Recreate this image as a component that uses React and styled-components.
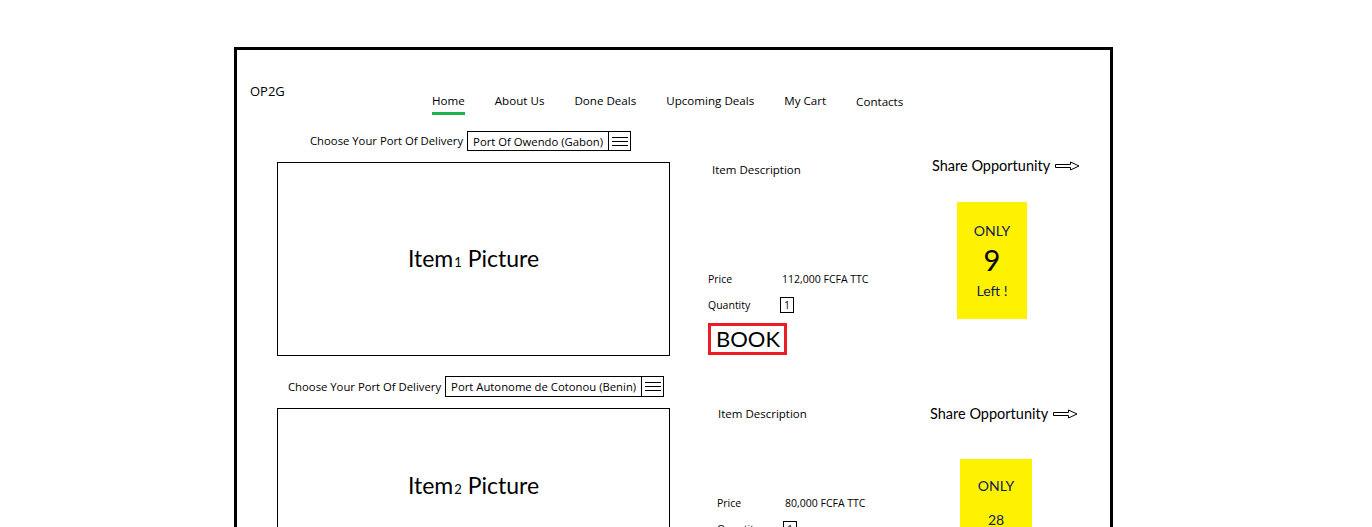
import React from 'react';
import styled, { createGlobalStyle } from 'styled-components';

const GlobalStyle = createGlobalStyle`
  body {
    margin: 0;
    background: #fff;
    overflow: hidden;
    color: #000;
    font-family: "Open Sans", "DejaVu Sans", sans-serif;
  }
`;

const navLinks = ['Home', 'About Us', 'Done Deals', 'Upcoming Deals', 'My Cart', 'Contacts'];

const deals = [
  {
    id: 1,
    port: 'Port Of Owendo (Gabon)',
    portIndent: 33,
    portGap: 16,
    selectHeight: 20,
    pictureHeight: 194,
    detailsOffset: 38,
    detailsWidth: 224,
    descIndent: 4,
    descShift: 0,
    priceGap: 93,
    labelWidth: 74,
    price: '112,000 FCFA TTC',
    sideOffset: -5,
    badgeGap: 27,
    badgeIndent: 25,
    badgeWidth: 70,
    badgePad: 20,
    count: '9',
    countSize: 29,
    countGap: 4,
  },
  {
    id: 2,
    port: 'Port Autonome de Cotonou (Benin)',
    portIndent: 11,
    portGap: 20,
    selectHeight: 21,
    pictureHeight: 156,
    detailsOffset: 47,
    detailsWidth: 213,
    descIndent: 1,
    descShift: -2,
    priceGap: 73,
    labelWidth: 68,
    price: '80,000 FCFA TTC',
    sideOffset: -3,
    badgeGap: 36,
    badgeIndent: 30,
    badgeWidth: 72,
    badgePad: 18,
    count: '28',
    countSize: 14,
    countGap: 16,
  },
];

const MenuIcon = () => (
  <svg width="16" height="11" viewBox="0 0 16 11">
    <path d="M0 1.5H16M0 5.5H16M0 9.5H16" stroke="#000" strokeWidth="1" />
  </svg>
);

const ShareArrow = () => (
  <svg width="25" height="10" viewBox="0 0 25 10">
    <path d="M0.5 3.5H15.5V1L24 5L15.5 9V6.5H0.5Z" fill="#fff" stroke="#000" strokeWidth="1" />
  </svg>
);

const DealItem = ({ deal }) => (
  <Deal $gap={deal.portGap}>
    <PortRow $indent={deal.portIndent}>
      <PortLabel>Choose Your Port Of Delivery</PortLabel>
      <PortSelect $height={deal.selectHeight}>
        <PortValue>{deal.port}</PortValue>
        <PortToggle>
          <MenuIcon />
        </PortToggle>
      </PortSelect>
    </PortRow>
    <DealBody>
      <Picture $height={deal.pictureHeight}>
        <span>
          Item<Sub>{deal.id}</Sub> Picture
        </span>
      </Picture>
      <Details $offset={deal.detailsOffset} $width={deal.detailsWidth}>
        <Description $indent={deal.descIndent} $shift={deal.descShift}>
          Item Description
        </Description>
        <InfoRow $gap={deal.priceGap} $label={deal.labelWidth}>
          <span>Price</span>
          <span>{deal.price}</span>
        </InfoRow>
        <InfoRow $gap={10} $label={deal.labelWidth}>
          <span>Quantity</span>
          <QtyBox>1</QtyBox>
        </InfoRow>
        <BookButton>BOOK</BookButton>
      </Details>
      <Side $offset={deal.sideOffset}>
        <Share>
          <span>Share Opportunity</span>
          <ShareArrow />
        </Share>
        <Badge
          $gap={deal.badgeGap}
          $indent={deal.badgeIndent}
          $width={deal.badgeWidth}
          $pad={deal.badgePad}
        >
          <BadgeText>ONLY</BadgeText>
          <BadgeCount $size={deal.countSize} $gap={deal.countGap}>
            {deal.count}
          </BadgeCount>
          <BadgeText $gap={6}>Left !</BadgeText>
        </Badge>
      </Side>
    </DealBody>
  </Deal>
);

export default function App() {
  return (
    <>
      <GlobalStyle />
      <Frame>
        <Header>
          <Logo>OP2G</Logo>
          <Nav>
            {navLinks.map((link, i) => (
              <NavLink key={link} $active={i === 0} $drop={link === 'Contacts'}>
                {link}
              </NavLink>
            ))}
          </Nav>
        </Header>
        {deals.map((deal) => (
          <DealItem key={deal.id} deal={deal} />
        ))}
      </Frame>
    </>
  );
}

const Frame = styled.div`
  box-sizing: border-box;
  width: 879px;
  min-height: 640px;
  margin: 47px 0 0 234px;
  border: 3px solid #000;
  padding: 0 0 40px 40px;
`;

const Header = styled.header`
  display: flex;
  align-items: flex-start;
  padding-top: 32px;
  margin-left: -27px;
`;

const Logo = styled.div`
  width: 182px;
  font-size: 13px;
  line-height: 18px;
`;

const Nav = styled.nav`
  display: flex;
  gap: 30px;
  margin-top: 11px;
`;

const NavLink = styled.a`
  font-size: 11.6px;
  line-height: 16px;
  padding-bottom: 2px;
  margin-top: ${(p) => (p.$drop ? '1px' : '0')};
  border-bottom: 3px solid ${(p) => (p.$active ? '#22b14c' : 'transparent')};
  color: #000;
  cursor: pointer;
`;

const Deal = styled.section`
  margin-top: ${(p) => p.$gap}px;
`;

const PortRow = styled.div`
  display: flex;
  align-items: center;
  gap: 4px;
  margin-left: ${(p) => p.$indent}px;
  font-size: 11.3px;
`;

const PortLabel = styled.span`
  line-height: 16px;
`;

const PortSelect = styled.div`
  box-sizing: border-box;
  display: flex;
  align-items: stretch;
  height: ${(p) => p.$height}px;
  border: 1px solid #000;
`;

const PortValue = styled.span`
  display: flex;
  align-items: center;
  padding: 0 5px 0 5px;
  border-right: 1px solid #000;
`;

const PortToggle = styled.span`
  display: flex;
  align-items: center;
  justify-content: center;
  width: 21px;
`;

const DealBody = styled.div`
  display: flex;
  align-items: flex-start;
  margin-top: 11px;
`;

const Picture = styled.div`
  box-sizing: border-box;
  display: flex;
  align-items: center;
  justify-content: center;
  flex: none;
  width: 393px;
  height: ${(p) => p.$height}px;
  padding-bottom: 2px;
  border: 1px solid #000;
  font-family: Lato, "Liberation Sans", sans-serif;
  font-size: 23px;
`;

const Sub = styled.span`
  font-size: 13px;
  margin-left: 1px;
`;

const Details = styled.div`
  display: flex;
  flex-direction: column;
  align-items: flex-start;
  flex: none;
  width: ${(p) => p.$width}px;
  margin-left: ${(p) => p.$offset}px;
  font-size: 11.5px;
`;

const Description = styled.div`
  line-height: 16px;
  margin-top: ${(p) => p.$shift}px;
  padding-left: ${(p) => p.$indent}px;
`;

const InfoRow = styled.div`
  display: grid;
  grid-template-columns: ${(p) => p.$label}px auto;
  align-items: center;
  min-height: 16px;
  margin-top: ${(p) => p.$gap}px;
  font-size: 10.5px;
`;

const QtyBox = styled.span`
  box-sizing: border-box;
  display: flex;
  align-items: center;
  justify-content: center;
  width: 14px;
  height: 16px;
  margin-left: -2px;
  border: 1px solid #000;
`;

const BookButton = styled.button`
  margin-top: 10px;
  padding: 0 4px 0 5px;
  height: 32px;
  background: #fff;
  border: 3px solid #ed1c24;
  border-radius: 0;
  font-family: Lato, "Liberation Sans", sans-serif;
  font-size: 22px;
  line-height: 26px;
  color: #000;
`;

const Side = styled.div`
  display: flex;
  flex-direction: column;
  align-items: flex-start;
  margin-top: ${(p) => p.$offset}px;
`;

const Share = styled.div`
  display: flex;
  align-items: center;
  gap: 5px;
  font-family: Lato, "Liberation Sans", sans-serif;
  font-size: 14.5px;
  line-height: 18px;
`;

const Badge = styled.div`
  display: flex;
  flex-direction: column;
  align-items: center;
  box-sizing: border-box;
  width: ${(p) => p.$width}px;
  height: 117px;
  margin: ${(p) => p.$gap}px 0 0 ${(p) => p.$indent}px;
  padding-top: ${(p) => p.$pad}px;
  background: #fff200;
  color: #10205a;
  font-family: Lato, "Liberation Sans", sans-serif;
`;

const BadgeText = styled.div`
  font-size: 14px;
  line-height: 18px;
  margin-top: ${(p) => p.$gap || 0}px;
`;

const BadgeCount = styled.div`
  font-size: ${(p) => p.$size}px;
  line-height: ${(p) => (p.$size > 20 ? 32 : 18)}px;
  margin-top: ${(p) => p.$gap}px;
  color: ${(p) => (p.$size > 20 ? '#000' : '#10205a')};
`;
